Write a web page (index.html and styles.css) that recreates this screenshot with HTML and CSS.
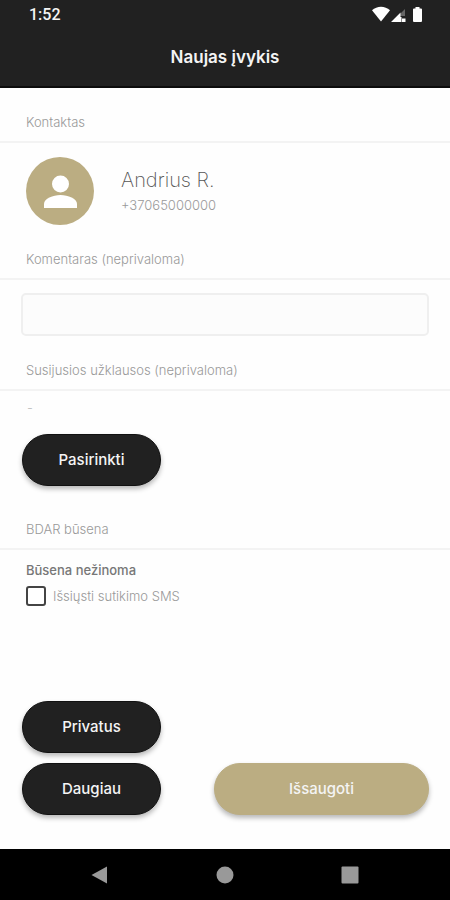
FILE: index.html
```html
<!DOCTYPE html>
<html lang="lt">
<head>
  <meta charset="utf-8">
  <meta name="viewport" content="width=device-width, initial-scale=1">
  <title>Naujas įvykis</title>
  <link rel="stylesheet" href="styles.css">
</head>
<body>
  <header class="header">
    <div class="status">
      <span class="clock">1:52</span>
      <svg class="status-icons" viewBox="0 0 52 18" aria-hidden="true">
        <path fill="#fff" d="M0 4.200C5-.5 13-.5 18 4.200L9 15.500Z"/>
        <path fill="#666" d="M33 3v7h-7Z"/>
        <path fill="#fff" d="M19 16l9.500-9.500V11h1V16ZM30 12.500h3.500V16H30Z"/>
        <path fill="#fff" d="M43.500 1h4v1.500h1.500q1 0 1 1V15q0 1-1 1h-7q-1 0-1-1V3.500q0-1 1-1h1.500Z"/>
      </svg>
    </div>
    <h1 class="title">Naujas įvykis</h1>
  </header>

  <main class="content">
    <section>
      <h2 class="heading">Kontaktas</h2>
      <div class="contact">
        <svg class="avatar" viewBox="0 0 68 68" aria-hidden="true">
          <circle cx="34" cy="34" r="34" fill="#bbad82"/>
          <circle cx="34.500" cy="27" r="8.500" fill="#fff"/>
          <path fill="#fff" d="M18 51v-4c0-5.500 9-9 16.500-9S51 41.500 51 47v4Z"/>
        </svg>
        <div>
          <p class="name">Andrius R.</p>
          <p class="phone">+37065000000</p>
        </div>
      </div>
    </section>

    <section>
      <h2 class="heading"><label for="comment">Komentaras (neprivaloma)</label></h2>
      <div class="comment">
        <input class="field" id="comment" type="text">
      </div>
    </section>

    <section>
      <h2 class="heading">Susijusios užklausos (neprivaloma)</h2>
      <div class="requests">
        <p class="empty">-</p>
        <button class="button" type="button">Pasirinkti</button>
      </div>
    </section>

    <section>
      <h2 class="heading">BDAR būsena</h2>
      <div class="consent">
        <p class="state">Būsena nežinoma</p>
        <label class="check"><input class="box" type="checkbox">Išsiųsti sutikimo SMS</label>
      </div>
    </section>

    <div class="actions">
      <div class="stack">
        <button class="button" type="button">Privatus</button>
        <button class="button" type="button">Daugiau</button>
      </div>
      <button class="button save" type="submit">Išsaugoti</button>
    </div>
  </main>

  <nav class="navbar" aria-label="Sistema">
    <button class="key" type="button" aria-label="Atgal">
      <svg viewBox="0 0 20 20" aria-hidden="true"><path d="M17 1.500v17L1.500 10Z"/></svg>
    </button>
    <button class="key" type="button" aria-label="Pradžia">
      <svg viewBox="0 0 20 20" aria-hidden="true"><circle cx="10" cy="10" r="8.500"/></svg>
    </button>
    <button class="key" type="button" aria-label="Programos">
      <svg viewBox="0 0 20 20" aria-hidden="true"><rect x="1.500" y="1.500" width="17" height="17" rx="1"/></svg>
    </button>
  </nav>
</body>
</html>
```
FILE: styles.css
```css
* {
  box-sizing: border-box;
}

body {
  display: flex;
  flex-direction: column;
  min-height: 100vh;
  margin: 0;
  background: #fefefe;
  color: #999;
  font: 300 13px/20px Inter, "Liberation Sans", sans-serif;
}

h1,
h2,
p {
  margin: 0;
}

.header {
  height: 88px;
  border-bottom: 2px solid #0c0c0c;
  background: #212121;
  color: #f4f4f4;
}

.status {
  display: flex;
  align-items: center;
  justify-content: space-between;
  height: 29px;
  padding: 0 26px 0 29px;
}

.clock {
  font: 500 16px/29px Roboto, sans-serif;
}

.status-icons {
  width: 52px;
  height: 18px;
}

.title {
  padding-top: 16px;
  font-size: 17px;
  font-weight: 600;
  line-height: 24px;
  text-align: center;
}

.content {
  display: flex;
  flex: 1;
  flex-direction: column;
}

.heading {
  padding: 24px 26px 9px;
  border-bottom: 2px solid #f3f3f3;
  font-size: 13px;
  font-weight: 300;
}

.contact {
  display: flex;
  align-items: center;
  gap: 27px;
  padding: 14px 26px 0;
}

.avatar {
  width: 68px;
  height: 68px;
}

.name {
  color: #555;
  font-size: 20px;
  font-weight: 200;
  line-height: 28px;
}

.phone {
  font-size: 13px;
  line-height: 22px;
}

.comment {
  padding: 13px 21px 0;
}

.field {
  display: block;
  width: 100%;
  height: 43px;
  padding: 0 12px;
  border: 2px solid #efefef;
  border-radius: 5px;
  background: #fcfcfc;
  color: #555;
  font: inherit;
}

.requests {
  padding: 7px 22px 9px;
}

.empty {
  padding: 0 5px 16px;
  color: #bbb;
}

.button {
  width: 139px;
  height: 52px;
  padding: 0;
  border: 1px solid #111;
  border-radius: 26px;
  background: #212121;
  box-shadow: 0 3px 5px rgb(0 0 0 / 28%);
  color: #f4f4f4;
  font: 500 15px/20px Inter, "Liberation Sans", sans-serif;
}

.consent {
  padding: 10px 26px 24px;
}

.state {
  color: #777;
  font-weight: 500;
}

.check {
  display: flex;
  align-items: center;
  gap: 7px;
  padding-top: 6px;
}

.box {
  appearance: none;
  width: 20px;
  height: 20px;
  margin: 0;
  border: 2px solid #444;
  border-radius: 3px;
  background: #fff;
}

.box:checked {
  background: #444;
}

.actions {
  display: flex;
  align-items: flex-end;
  justify-content: space-between;
  gap: 53px;
  margin-top: auto;
  padding: 0 21px 34px 22px;
}

.stack {
  display: flex;
  flex-direction: column;
  gap: 10px;
}

.save {
  flex: 1;
  border-color: #bbad82;
  background: #bbad82;
}

.navbar {
  display: flex;
  align-items: center;
  justify-content: center;
  gap: 105px;
  height: 51px;
  background: #000;
}

.key {
  width: 20px;
  height: 20px;
  padding: 0;
  border: 0;
  background: none;
}

.key svg {
  display: block;
  fill: #999;
}
```
